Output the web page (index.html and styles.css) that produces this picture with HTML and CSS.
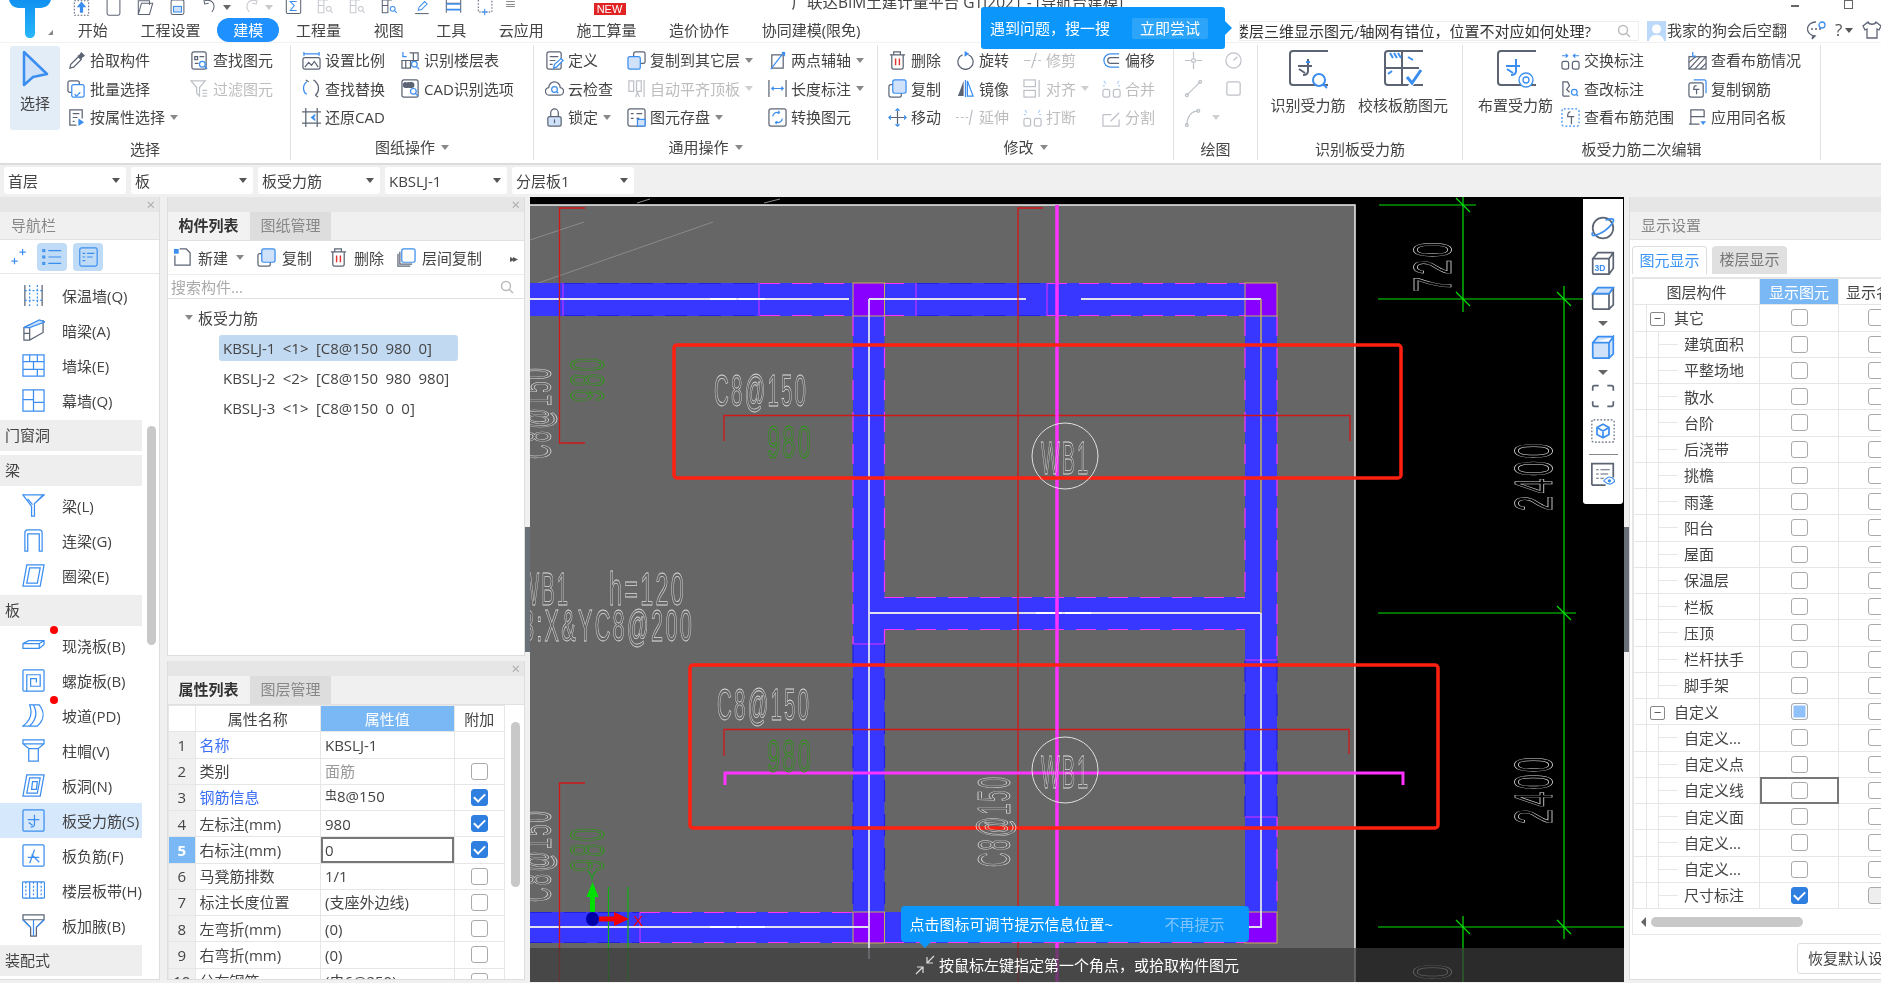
FILE: index.html
```html
<!DOCTYPE html>
<html lang="zh-CN">
<head>
<meta charset="utf-8">
<title>广联达BIM土建计量平台 GTJ2021</title>
<link rel="stylesheet" href="styles.css">
</head>
<body>
<svg class="defs" width="0" height="0">
<defs><linearGradient id="logoG" x1="0" y1="0" x2="0" y2="1"><stop offset="0" stop-color="#0f8ff0"/><stop offset="1" stop-color="#27b6fa"/></linearGradient></defs>
<symbol id="pick" viewBox="0 0 20 20"><path class="g" d="M3 18l1-4 8-8 3 3-8 8z"/><path class="fg" d="M11 5l2-1 2-3 4 4-3 2-1 2z"/></symbol>
<symbol id="batch" viewBox="0 0 20 20"><rect class="g" x="1" y="2" width="12" height="12" rx="2"/><rect class="b w" x="5" y="6" width="13" height="13" rx="2"/><path class="b" d="M8 16l2 2 4-4"/></symbol>
<symbol id="attr" viewBox="0 0 20 20"><path class="g" d="M10 18H3V2h13v9"/><path class="g" d="M6 6h7M6 10h5M6 14h2"/><path class="fb" d="M12 11l6 4-6 4z"/></symbol>
<symbol id="find" viewBox="0 0 20 20"><rect class="g" x="2" y="1" width="15" height="18" rx="2"/><path class="g" d="M5 6h3v3H5zM10 6h5M5 13h4"/><circle class="b w" cx="13" cy="14" r="3"/><path class="b" d="M15 16l3 3"/></symbol>
<symbol id="filter" viewBox="0 0 20 20"><path class="g" d="M1 2h15l-6 7v9l-3-3V9z"/><path class="g" d="M13 12h5M13 15h5M13 18h5"/></symbol>
<symbol id="scale" viewBox="0 0 20 20"><path class="b" d="M2 1v4M18 1v4M2 3h16"/><rect class="g" x="1" y="7" width="18" height="12" rx="2"/><path class="g" d="M3 17l4-5 3 3 3-4 4 6"/></symbol>
<symbol id="replace" viewBox="0 0 20 20"><path class="b" d="M5 3C0 7 1 14 5 16M5 16l-2-1"/><path class="g" d="M14 3c5 4 4 11 0 14M14 17l3 2M4 1l3 2M12 1l3 2"/></symbol>
<symbol id="restore" viewBox="0 0 20 20"><path class="g" d="M0 4h20M0 16h20M4 0v20M16 0v20"/><path class="fb" d="M9 10l5-4v3h-1v2h1v3z"/></symbol>
<symbol id="floor" viewBox="0 0 20 20"><path class="g" d="M9 2h9v8h-9M1 10h9v8H1zM13 2v8M5 10v8"/><path class="b" d="M2 1v5h4"/><circle class="b w" cx="14" cy="14" r="3"/><path class="b" d="M16 16l3 3"/></symbol>
<symbol id="cadopt" viewBox="0 0 20 20"><rect class="g" x="1" y="1" width="17" height="18" rx="2"/><text class="cadt" x="2.500" y="8">CAD</text><circle class="b w" cx="13" cy="13" r="3"/><path class="b" d="M15 15l3 3"/></symbol>
<symbol id="def" viewBox="0 0 20 20"><rect class="g" x="2" y="1" width="15" height="18" rx="2"/><path class="g" d="M5 6h9M5 10h6M5 14h3"/><path class="b w" d="M9 18l1-4 7-6 2 2-7 7z"/></symbol>
<symbol id="cloud" viewBox="0 0 20 20"><path class="g" d="M5 17a4 4 0 0 1-1-8 6 6 0 0 1 12 0 4 4 0 0 1-1 8z"/><circle class="b" cx="10" cy="11" r="3"/><path class="b" d="M12 13l2 2"/></symbol>
<symbol id="lock" viewBox="0 0 20 20"><path class="g" d="M6 9V5a4 4 0 0 1 8 0v4"/><rect class="g l" x="3" y="9" width="14" height="10" rx="2"/><path class="g" d="M10 12v4"/></symbol>
<symbol id="copyto" viewBox="0 0 20 20"><rect class="g" x="7" y="1" width="12" height="12" rx="2"/><rect class="b l" x="1" y="6" width="13" height="13" rx="2"/></symbol>
<symbol id="align" viewBox="0 0 20 20"><path class="g" d="M2 2h5v11H2zM10 2h5v11h-5zM18 1v18"/><path class="g" d="M9 19l2-5 2 5"/></symbol>
<symbol id="save" viewBox="0 0 20 20"><rect class="g" x="1" y="1" width="18" height="18" rx="2"/><path class="g" d="M4 6h3M10 6h6M4 11h3M10 11h3"/><rect class="b l" x="11" y="12" width="8" height="7"/></symbol>
<symbol id="twoaxis" viewBox="0 0 20 20"><path class="g" d="M4 4h12v14H4z"/><path class="b" d="M3 19L17 1"/><path class="fb" d="M14 1h4v5z"/></symbol>
<symbol id="length" viewBox="0 0 20 20"><path class="g" d="M1 1v18M19 1v18"/><path class="b" d="M4 10h12M6 8l-2 2 2 2M14 8l2 2-2 2"/></symbol>
<symbol id="convert" viewBox="0 0 20 20"><rect class="g" x="1" y="1" width="18" height="18" rx="2"/><path class="b" d="M5 9c0-3 3-5 6-4M11 3l1 2-2 1M15 11c0 3-3 5-6 4M9 17l-1-2 2-1"/></symbol>
<symbol id="delete" viewBox="0 0 20 20"><path class="g" d="M6 4V1h7v3M2 4h16M4 4v13a2 2 0 0 0 2 2h8a2 2 0 0 0 2-2V4"/><path class="r" d="M8 8v7M12 8v7"/></symbol>
<symbol id="rotate" viewBox="0 0 20 20"><path class="g" d="M7 4a8 8 0 1 0 6 0"/><path class="fb" d="M9 0l5 3-5 3z"/></symbol>
<symbol id="trim" viewBox="0 0 20 20"><path class="g" d="M1 10h7M12 10h2M16 10h3M14 2l-5 16"/></symbol>
<symbol id="offset" viewBox="0 0 20 20"><path class="b" d="M18 3H9a7 7 0 0 0 0 14h9"/><path class="g" d="M18 7H9a3 3 0 0 0 0 6h9"/></symbol>
<symbol id="copy" viewBox="0 0 20 20"><rect class="g" x="1" y="6" width="13" height="13" rx="2"/><rect class="b l" x="5" y="1" width="14" height="14" rx="2"/></symbol>
<symbol id="mirror" viewBox="0 0 20 20"><path class="fg" d="M8 2L2 18h6z"/><path class="b" d="M12 2l6 16h-6zM10 1v18"/></symbol>
<symbol id="alignb" viewBox="0 0 20 20"><rect class="g" x="1" y="1" width="12" height="7"/><rect class="g" x="1" y="12" width="12" height="7"/><path class="g" d="M17 1v18"/></symbol>
<symbol id="merge" viewBox="0 0 20 20"><rect class="g" x="1" y="11" width="7" height="8" rx="2"/><rect class="g" x="12" y="11" width="7" height="8" rx="2"/><path class="b" d="M2 2l2 3M18 2l-2 3M1 7h2M17 7h2"/></symbol>
<symbol id="move" viewBox="0 0 20 20"><path class="g" d="M3 10h14M10 3v14"/><path class="fb" d="M10 0l3 3H7zM10 20l3-3H7zM0 10l3-3v6zM20 10l-3-3v6z"/></symbol>
<symbol id="extend" viewBox="0 0 20 20"><path class="g" d="M0 10h3M5 10h3M10 10h3M17 2l-3 16"/></symbol>
<symbol id="split" viewBox="0 0 20 20"><path class="g" d="M1 7h9M18 12v7H1V7M9 14l9-9"/></symbol>
<symbol id="cross" viewBox="0 0 20 20"><path class="g" d="M1 10h6M13 10h6M10 1v6M10 13v6"/><circle class="g" cx="10" cy="10" r="2"/></symbol>
<symbol id="dial" viewBox="0 0 20 20"><circle class="g" cx="10" cy="10" r="8"/><path class="g" d="M10 10l4-4"/></symbol>
<symbol id="line" viewBox="0 0 20 20"><path class="g" d="M3 17L17 3"/><circle class="g" cx="3" cy="17" r="1.500"/><circle class="g" cx="17" cy="3" r="1.500"/></symbol>
<symbol id="sq" viewBox="0 0 20 20"><rect class="g" x="3" y="3" width="14" height="14" rx="2"/></symbol>
<symbol id="arc" viewBox="0 0 20 20"><path class="g" d="M3 18C3 9 8 3 15 3"/><circle class="g" cx="3" cy="18" r="1.500"/><circle class="g" cx="15" cy="3" r="1.500"/></symbol>
<symbol id="swap" viewBox="0 0 20 20"><rect class="g" x="1" y="11" width="7" height="8" rx="2"/><rect class="g" x="12" y="11" width="7" height="8" rx="2"/><path class="b" d="M1 5h5M5 3l2 2-2 2M19 5h-5M15 3l-2 2 2 2"/></symbol>
<symbol id="chk" viewBox="0 0 20 20"><path class="g" d="M2 18V3h5l2 4-3 4 3 3M9 18H2"/><circle class="b" cx="14" cy="14" r="3"/><path class="b" d="M16 16l2 2"/></symbol>
<symbol id="range" viewBox="0 0 20 20"><rect class="b dash" x="1" y="1" width="18" height="18" rx="2"/><path class="g" d="M10 4c-3 0-3 3-3 5h7M11 9v8"/></symbol>
<symbol id="status" viewBox="0 0 20 20"><rect class="g" x="1" y="6" width="18" height="13"/><path class="g" d="M1 12l7-6M1 19L13 6M7 19l12-13M13 19l6-6"/><path class="b" d="M5 1v4a2 2 0 0 0 3 0"/></symbol>
<symbol id="cprebar" viewBox="0 0 20 20"><path class="b" d="M6 1h11a2 2 0 0 1 2 2v12"/><rect class="g" x="1" y="4" width="15" height="15" rx="2"/><path class="g" d="M9 7c-3 0-3 3-3 4h6M9 11v5"/></symbol>
<symbol id="same" viewBox="0 0 20 20"><path class="g" d="M3 17V2h14M1 17h11M17 2v8M3 9h14"/><path class="fb" d="M13 14h6l-3 4z"/></symbol>
<symbol id="bigfind" viewBox="0 0 40 40"><rect class="g2" x="2" y="2" width="34" height="34" rx="3"/><path class="g2" d="M10 17h14M20 10v12c0 3-2 4-5 4M11 20l6 4"/><path class="b2" d="M22 13h-4"/><circle class="b2 w" cx="31" cy="31" r="6"/><path class="b2" d="M35 35l4 4"/></symbol>
<symbol id="bigcheck" viewBox="0 0 40 40"><rect class="g2" x="2" y="2" width="34" height="34" rx="3"/><path class="g2" d="M19 2v34M2 19h34"/><path class="b2" d="M7 4l3 5M11 4l3 5M15 4l3 5M25 8l5 3M5 25l4-3"/><path class="w2" d="M24 38l12-16 4 3-13 15z"/><path class="b3" d="M24 28l5 6 9-13"/></symbol>
<symbol id="bigset" viewBox="0 0 40 40"><rect class="g2" x="2" y="2" width="34" height="34" rx="3"/><path class="b2" d="M10 17h14M20 10v12c0 3-2 4-5 4M11 20l6 4"/><circle class="b w" cx="30" cy="31" r="7"/><circle class="b" cx="30" cy="31" r="3"/></symbol>
<symbol id="nwall" viewBox="0 0 24 24"><path class="g" d="M3 1v22M21 1v22"/><path class="b dash" d="M8 1v22M16 1v22M3 7h18M3 17h18"/></symbol>
<symbol id="nhid" viewBox="0 0 24 24"><path class="g" d="M2 9l6-3 14-4v12l-14 8H2zM8 6v16M2 15h6"/><path class="b l" d="M2 9l16-8 6 2-16 6z"/></symbol>
<symbol id="nblock" viewBox="0 0 24 24"><path class="b" d="M1 1h22v22H1zM1 8h22M1 16h22M8 1v7M16 1v7M12 8v8M16 16v7"/></symbol>
<symbol id="ncurt" viewBox="0 0 24 24"><path class="b" d="M1 1h22v22H1zM12 1v22M1 11h11M12 14h11"/></symbol>
<symbol id="nbeam" viewBox="0 0 24 24"><path class="b" d="M1 1h22L13 10v13h-3V13zM6 5l5 6M13 10l9-9"/></symbol>
<symbol id="nlink" viewBox="0 0 24 24"><path class="b" d="M3 23V4a3 3 0 0 1 3-3h12a3 3 0 0 1 3 3v19h-3V5H6v18z"/></symbol>
<symbol id="nring" viewBox="0 0 24 24"><path class="b" d="M5 1h18l-4 22H1zM8 4h11l-3 16H5z"/></symbol>
<symbol id="nslab" viewBox="0 0 24 24"><path class="b" d="M1 10l6-3h16v4l-5 4H1zM1 10h17v5M18 10l5-3"/></symbol>
<symbol id="nspiral" viewBox="0 0 24 24"><rect class="b" x="1" y="1" width="22" height="22" rx="1"/><path class="b" d="M5 23V6h14v12H9V10h6v4"/></symbol>
<symbol id="nramp" viewBox="0 0 24 24"><path class="b" d="M8 1h10c6 8 5 16-2 22H1c8-6 10-14 7-22zM12 1c4 7 3 15-4 22"/></symbol>
<symbol id="ncap" viewBox="0 0 24 24"><path class="b" d="M1 1h22v4l-6 5v13H7V10L1 5zM1 5h22M7 10h10"/></symbol>
<symbol id="nhole" viewBox="0 0 24 24"><path class="b" d="M5 1h18l-4 22H1zM8 4h11l-3 16H5zM11 8h5l-1 8h-5z"/></symbol>
<symbol id="nrebar" viewBox="0 0 24 24"><rect class="b" x="1" y="1" width="22" height="22" rx="1"/><path class="b" d="M6 11h12M13 6v10c0 2-2 3-4 3M7 14l4 3"/></symbol>
<symbol id="nneg" viewBox="0 0 24 24"><rect class="b" x="1" y="1" width="22" height="22" rx="1"/><path class="b" d="M6 14h12M13 6L8 20M10 11l8 8"/></symbol>
<symbol id="nband" viewBox="0 0 24 24"><rect class="b" x="0.500" y="3" width="23" height="17" rx="1"/><path class="b" d="M8 3v17M16 3v17"/><path class="b dash" d="M4 3v17M12 3v17M20 3v17"/></symbol>
<symbol id="nhaunch" viewBox="0 0 24 24"><path class="g" d="M1 1h22v5l-8 8v9H9v-9L1 6zM1 6h22"/><path class="b" d="M1 6l8 8M23 6l-8 8M12 6v17"/></symbol>
<symbol id="tnew" viewBox="0 0 20 20"><path class="g" d="M2 8v10h16V5l-4-4H7"/><path class="fb" d="M1 1h5v5H1z"/></symbol>
<symbol id="tfloor" viewBox="0 0 20 20"><path class="g" d="M1 6v13h13M3 4v13h13"/><rect class="b w" x="5" y="1" width="14" height="14" rx="2"/></symbol>
<symbol id="search" viewBox="0 0 14 14"><circle class="g2l" cx="6" cy="6" r="4.500"/><path class="g2l" d="M9.500 9.500L13 13"/></symbol>
<symbol id="sparkle" viewBox="0 0 20 20"><path class="b" d="M14 1v7M10.500 4.500h7M5 11v7M1.500 14.500h7"/></symbol>
<symbol id="list" viewBox="0 0 24 24"><path class="b" d="M8 5h14M8 12h14M8 19h14"/><rect class="b" x="2" y="4" width="2" height="2"/><rect class="b" x="2" y="11" width="2" height="2"/><rect class="b" x="2" y="18" width="2" height="2"/></symbol>
<symbol id="form" viewBox="0 0 24 24"><rect class="b" x="3" y="2" width="19" height="20" rx="2"/><path class="b" d="M6 8h3M11 8h8M6 12h3M11 12h6M6 16h3"/></symbol>
<symbol id="qup" viewBox="0 0 20 20"><rect class="g dash" x="1" y="1" width="18" height="18"/><path class="fb" d="M10 2l6 7h-4v7H8V9H4z"/></symbol>
<symbol id="qnew" viewBox="0 0 20 20"><path class="g" d="M2 0v17a2 2 0 0 0 2 2h12a2 2 0 0 0 2-2V0"/></symbol>
<symbol id="qopen" viewBox="0 0 20 20"><path class="g" d="M1 18V1h14v5M1 18h14l4-14H5z"/></symbol>
<symbol id="qsave" viewBox="0 0 20 20"><rect class="g" x="2" y="0" width="16" height="18" rx="2"/><rect class="b l" x="5" y="8" width="10" height="7"/></symbol>
<symbol id="qundo" viewBox="0 0 20 20"><path class="g" d="M4 1c10-3 15 6 9 14"/><path class="g" d="M3 0l1 5 5-1"/></symbol>
<symbol id="qredo" viewBox="0 0 20 20"><path class="g" d="M16 1C6-2 1 7 7 15"/><path class="g" d="M17 0l-1 5-5-1"/></symbol>
<symbol id="qsum" viewBox="0 0 20 20"><rect class="g" x="1" y="-2" width="18" height="19" rx="2"/><path class="b" d="M14 2H6l5 5-5 6h8"/></symbol>
<symbol id="qgrid" viewBox="0 0 20 20"><path class="g" d="M1 0h7v7H1zM1 7v9h7V7M8 0h5"/><circle class="g" cx="14" cy="11" r="3"/><path class="g" d="M16 13l3 3"/></symbol>
<symbol id="qgridb" viewBox="0 0 20 20"><path class="g" d="M1 0h7v7H1zM1 7v9h7V7M8 0h5"/><circle class="b" cx="14" cy="11" r="3"/><path class="b" d="M16 13l3 3"/></symbol>
<symbol id="qpen" viewBox="0 0 20 20"><path class="g" d="M2 17h17"/><path class="b" d="M6 13l1-4 7-7 3 3-7 7z"/></symbol>
<symbol id="qframe" viewBox="0 0 20 20"><path class="g" d="M1 0v16M19 0v16M1 4h18M1 12h18"/><path class="fb" d="M1 4h18v2H1zM1 11h18v2H1z"/></symbol>
<symbol id="qplus" viewBox="0 0 20 20"><rect class="g dash" x="1" y="-2" width="17" height="17"/><path class="b" d="M5 15h8M9 11v8"/></symbol>
<symbol id="forbit" viewBox="0 0 28 28"><circle class="g2" cx="14" cy="14" r="12"/><path class="b2" d="M3 23c5-1 12-4 18-10 4-4 6-8 5-9-2-2-6 0-9 1M3 23c-2 0-2-2-1-4"/></symbol>
<symbol id="f3d" viewBox="0 0 28 28"><path class="g2" d="M2 9h19v18H4a2 2 0 0 1-2-2zM2 9l6-7h18v18l-5 7M21 9l5-7"/><text class="f3t" x="4" y="23">3D</text></symbol>
<symbol id="fbox" viewBox="0 0 28 28"><path class="g2" d="M2 9h19v18H4a2 2 0 0 1-2-2zM21 27l5-5V2M21 9l5-7"/><path class="b2 l" d="M2 9l6-7h18l-5 7z"/></symbol>
<symbol id="fboxb" viewBox="0 0 28 28"><path class="b2 l" d="M2 9h19v18H4a2 2 0 0 1-2-2zM21 27l5-5V2l-5 7zM2 9l6-7h18"/></symbol>
<symbol id="fbrk" viewBox="0 0 28 28"><path class="g2" d="M2 8V4a2 2 0 0 1 2-2h5M19 2h5a2 2 0 0 1 2 2v4M26 20v4a2 2 0 0 1-2 2h-5M9 26H4a2 2 0 0 1-2-2v-4"/></symbol>
<symbol id="fcube" viewBox="0 0 28 28"><rect class="g dash" x="1" y="1" width="26" height="26" rx="2"/><path class="b2" d="M14 6l7 4v8l-7 4-7-4v-8zM7 10l7 4 7-4M14 14v8"/></symbol>
<symbol id="fdoc" viewBox="0 0 28 28"><path class="g2" d="M17 27H3a2 2 0 0 1-2-2V2h25v16"/><path class="g" d="M6 9h3M11 9h11M6 14h3M11 14h9M6 19h3M11 19h4"/><path class="b" d="M15 22c5-6 9-6 13 0-4 5-8 5-13 0z"/><circle class="fb" cx="21.500" cy="22" r="2"/></symbol>
</svg>

<div class="app">
  <header class="head">
    <div class="logo">
      <svg class="logo-t" viewBox="0 0 42 40" width="42" height="40"><path class="logo-p" d="M0 0h42c0 5-3 9-10 10h-6v25c0 3-2 5-5 5s-5-2-5-5V10H9C3 9 0 5 0 0z"/></svg>
      <span class="logo-c"></span>
    </div>
    <div class="head-main">
      <div class="qa">
        <svg class="qi"><use href="#qup"/></svg>
        <svg class="qi"><use href="#qnew"/></svg>
        <svg class="qi"><use href="#qopen"/></svg>
        <svg class="qi"><use href="#qsave"/></svg>
        <svg class="qi"><use href="#qundo"/></svg><span class="car qcar"></span>
        <svg class="qi dis"><use href="#qredo"/></svg><span class="car qcar dis"></span>
        <svg class="qi"><use href="#qsum"/></svg>
        <svg class="qi dis"><use href="#qgrid"/></svg>
        <svg class="qi dis"><use href="#qgrid"/></svg>
        <svg class="qi"><use href="#qgridb"/></svg>
        <svg class="qi"><use href="#qpen"/></svg>
        <svg class="qi"><use href="#qframe"/></svg>
        <svg class="qi"><use href="#qplus"/></svg>
        <span class="qmore">≡</span>
        <span class="new">NEW</span>
        <span class="title">广联达BIM土建计量平台 GTJ2021 - [导航台建模]</span>
        <span class="winbtn winmin"></span>
        <span class="winbtn winmax"></span>
      </div>
      <div class="tabrow">
        <nav class="tabs">
          <span class="tab">开始</span><span class="tab">工程设置</span><span class="tab on">建模</span><span class="tab">工程量</span><span class="tab">视图</span><span class="tab">工具</span><span class="tab">云应用</span><span class="tab">施工算量</span><span class="tab">造价协作</span><span class="tab">协同建模(限免)</span>
        </nav>
        <div class="tabright">
          <div class="sbox"><span class="stext">楼层三维显示图元/轴网有错位，位置不对应如何处理?</span><svg class="sico"><use href="#search"/></svg></div>
          <svg class="avatar" viewBox="0 0 19 20"><rect width="19" height="20" fill="#bcd9fa"/><circle cx="9.500" cy="8" r="4.500" fill="#fff"/><path d="M2 20c1-5 4-6 7.500-6s6.500 1 7.500 6z" fill="#fff"/></svg>
          <span class="uname">我家的狗会后空翻</span>
          <svg class="hico hchat" viewBox="0 0 20 20"><path class="g" d="M9 2a8 7 0 1 0-1 14l-3 3 1-3"/><circle class="fg" cx="5" cy="9" r="1"/><circle class="fg" cx="9" cy="9" r="1"/><circle class="fg" cx="13" cy="9" r="1"/><circle class="b w" cx="15" cy="5" r="3"/></svg>
          <span class="hq">?</span><span class="car hqcar"></span>
          <svg class="hico" viewBox="0 0 20 20"><path class="g" d="M6 2L1 6l2 4 2-1v9h10V9l2 1 2-4-5-4c-1 3-7 3-8 0z"/></svg>
        </div>
      </div>
    </div>
    <div class="tip-search"><span>遇到问题，搜一搜</span><span class="tip-btn">立即尝试</span></div>
  </header>

  <section class="ribbon">
    <div class="grp g1">
      <div class="body">
        <div class="bigsel"><svg class="sel-ico" viewBox="0 0 28 40"><path d="M3 2v33l9-8 14-3z" fill="#cfe2fa" stroke="#3b8ef0" stroke-width="2.500" stroke-linejoin="round"/></svg><span>选择</span></div>
        <div class="col">
          <div class="it"><svg class="ic"><use href="#pick"/></svg>拾取构件</div>
          <div class="it"><svg class="ic"><use href="#batch"/></svg>批量选择</div>
          <div class="it"><svg class="ic"><use href="#attr"/></svg>按属性选择<span class="car"></span></div>
        </div>
        <div class="col">
          <div class="it"><svg class="ic"><use href="#find"/></svg>查找图元</div>
          <div class="it dis"><svg class="ic"><use href="#filter"/></svg>过滤图元</div>
        </div>
      </div>
      <div class="lab">选择</div>
    </div>
    <div class="grp g2">
      <div class="body">
        <div class="col">
          <div class="it"><svg class="ic"><use href="#scale"/></svg>设置比例</div>
          <div class="it"><svg class="ic"><use href="#replace"/></svg>查找替换</div>
          <div class="it"><svg class="ic"><use href="#restore"/></svg>还原CAD</div>
        </div>
        <div class="col">
          <div class="it"><svg class="ic"><use href="#floor"/></svg>识别楼层表</div>
          <div class="it"><svg class="ic"><use href="#cadopt"/></svg>CAD识别选项</div>
        </div>
      </div>
      <div class="lab up">图纸操作<span class="car"></span></div>
    </div>
    <div class="grp g3">
      <div class="body">
        <div class="col">
          <div class="it"><svg class="ic"><use href="#def"/></svg>定义</div>
          <div class="it"><svg class="ic"><use href="#cloud"/></svg>云检查</div>
          <div class="it"><svg class="ic"><use href="#lock"/></svg>锁定<span class="car"></span></div>
        </div>
        <div class="col">
          <div class="it"><svg class="ic"><use href="#copyto"/></svg>复制到其它层<span class="car"></span></div>
          <div class="it dis"><svg class="ic"><use href="#align"/></svg>自动平齐顶板<span class="car"></span></div>
          <div class="it"><svg class="ic"><use href="#save"/></svg>图元存盘<span class="car"></span></div>
        </div>
        <div class="col">
          <div class="it"><svg class="ic"><use href="#twoaxis"/></svg>两点辅轴<span class="car"></span></div>
          <div class="it"><svg class="ic"><use href="#length"/></svg>长度标注<span class="car"></span></div>
          <div class="it"><svg class="ic"><use href="#convert"/></svg>转换图元</div>
        </div>
      </div>
      <div class="lab up">通用操作<span class="car"></span></div>
    </div>
    <div class="grp g4">
      <div class="body">
        <div class="col">
          <div class="it"><svg class="ic"><use href="#delete"/></svg>删除</div>
          <div class="it"><svg class="ic"><use href="#copy"/></svg>复制</div>
          <div class="it"><svg class="ic"><use href="#move"/></svg>移动</div>
        </div>
        <div class="col">
          <div class="it"><svg class="ic"><use href="#rotate"/></svg>旋转</div>
          <div class="it"><svg class="ic"><use href="#mirror"/></svg>镜像</div>
          <div class="it dis"><svg class="ic"><use href="#extend"/></svg>延伸</div>
        </div>
        <div class="col">
          <div class="it dis"><svg class="ic"><use href="#trim"/></svg>修剪</div>
          <div class="it dis"><svg class="ic"><use href="#alignb"/></svg>对齐<span class="car"></span></div>
          <div class="it dis"><svg class="ic"><use href="#merge"/></svg>打断</div>
        </div>
        <div class="col">
          <div class="it"><svg class="ic"><use href="#offset"/></svg>偏移</div>
          <div class="it dis"><svg class="ic"><use href="#merge"/></svg>合并</div>
          <div class="it dis"><svg class="ic"><use href="#split"/></svg>分割</div>
        </div>
      </div>
      <div class="lab up">修改<span class="car"></span></div>
    </div>
    <div class="grp g5">
      <div class="body">
        <div class="col">
          <div class="it dis"><svg class="ic"><use href="#cross"/></svg></div>
          <div class="it dis"><svg class="ic"><use href="#line"/></svg></div>
          <div class="it dis"><svg class="ic"><use href="#arc"/></svg><span class="car"></span></div>
        </div>
        <div class="col">
          <div class="it dis"><svg class="ic"><use href="#dial"/></svg></div>
          <div class="it dis"><svg class="ic"><use href="#sq"/></svg></div>
        </div>
      </div>
      <div class="lab">绘图</div>
    </div>
    <div class="grp g6">
      <div class="body">
        <div class="bigit"><svg class="bigic"><use href="#bigfind"/></svg>识别受力筋</div>
        <div class="bigit"><svg class="bigic"><use href="#bigcheck"/></svg>校核板筋图元</div>
      </div>
      <div class="lab">识别板受力筋</div>
    </div>
    <div class="grp g7">
      <div class="body">
        <div class="bigit"><svg class="bigic"><use href="#bigset"/></svg>布置受力筋</div>
        <div class="col">
          <div class="it"><svg class="ic"><use href="#swap"/></svg>交换标注</div>
          <div class="it"><svg class="ic"><use href="#chk"/></svg>查改标注</div>
          <div class="it"><svg class="ic"><use href="#range"/></svg>查看布筋范围</div>
        </div>
        <div class="col">
          <div class="it"><svg class="ic"><use href="#status"/></svg>查看布筋情况</div>
          <div class="it"><svg class="ic"><use href="#cprebar"/></svg>复制钢筋</div>
          <div class="it"><svg class="ic"><use href="#same"/></svg>应用同名板</div>
        </div>
      </div>
      <div class="lab">板受力筋二次编辑</div>
    </div>
  </section>

  <div class="selbar">
    <div class="sel">首层<span class="car"></span></div>
    <div class="sel">板<span class="car"></span></div>
    <div class="sel">板受力筋<span class="car"></span></div>
    <div class="sel">KBSLJ-1<span class="car"></span></div>
    <div class="sel">分层板1<span class="car"></span></div>
  </div>

  <main class="main">
    <aside class="nav">
      <div class="closebar">×</div>
      <div class="navhead">导航栏</div>
      <div class="navtools">
        <svg class="nt-spark"><use href="#sparkle"/></svg>
        <span class="nt-btn"><svg class="nt-ic"><use href="#list"/></svg></span>
        <span class="nt-btn"><svg class="nt-ic"><use href="#form"/></svg></span>
      </div>
      <div class="navbody">
        <div class="navlist">
          <div class="ni"><svg class="nic"><use href="#nwall"/></svg>保温墙(Q)</div>
          <div class="ni"><svg class="nic"><use href="#nhid"/></svg>暗梁(A)</div>
          <div class="ni"><svg class="nic"><use href="#nblock"/></svg>墙垛(E)</div>
          <div class="ni"><svg class="nic"><use href="#ncurt"/></svg>幕墙(Q)</div>
          <div class="nsec">门窗洞</div>
          <div class="nsec">梁</div>
          <div class="ni"><svg class="nic"><use href="#nbeam"/></svg>梁(L)</div>
          <div class="ni"><svg class="nic"><use href="#nlink"/></svg>连梁(G)</div>
          <div class="ni"><svg class="nic"><use href="#nring"/></svg>圈梁(E)</div>
          <div class="nsec">板</div>
          <div class="ni"><svg class="nic"><use href="#nslab"/></svg><i class="dot"></i>现浇板(B)</div>
          <div class="ni"><svg class="nic"><use href="#nspiral"/></svg>螺旋板(B)</div>
          <div class="ni"><svg class="nic"><use href="#nramp"/></svg><i class="dot"></i>坡道(PD)</div>
          <div class="ni"><svg class="nic"><use href="#ncap"/></svg>柱帽(V)</div>
          <div class="ni"><svg class="nic"><use href="#nhole"/></svg>板洞(N)</div>
          <div class="ni on"><svg class="nic"><use href="#nrebar"/></svg>板受力筋(S)</div>
          <div class="ni"><svg class="nic"><use href="#nneg"/></svg>板负筋(F)</div>
          <div class="ni"><svg class="nic"><use href="#nband"/></svg>楼层板带(H)</div>
          <div class="ni"><svg class="nic"><use href="#nhaunch"/></svg>板加腋(B)</div>
          <div class="nsec">装配式</div>
        </div>
        <div class="navscroll"><span class="thumb"></span></div>
      </div>
    </aside>

    <div class="midcol">
      <section class="panel comp">
        <div class="closebar">×</div>
        <div class="ptabs"><span class="ptab on">构件列表</span><span class="ptab">图纸管理</span></div>
        <div class="ctools">
          <span class="ct ct-new"><svg class="ic"><use href="#tnew"/></svg>新建<span class="car"></span></span>
          <span class="ct ct-cp"><svg class="ic"><use href="#copy"/></svg>复制</span>
          <span class="ct ct-del"><svg class="ic"><use href="#delete"/></svg>删除</span>
          <span class="ct ct-fl"><svg class="ic"><use href="#tfloor"/></svg>层间复制</span>
          <span class="ct-more">▸▸</span>
        </div>
        <div class="csearch"><span>搜索构件...</span><svg class="sico"><use href="#search"/></svg></div>
        <div class="tree">
          <div class="troot"><span class="car"></span>板受力筋</div>
          <div class="tn on">KBSLJ-1 &lt;1&gt; [C8@150 980 0]</div>
          <div class="tn">KBSLJ-2 &lt;2&gt; [C8@150 980 980]</div>
          <div class="tn">KBSLJ-3 &lt;1&gt; [C8@150 0 0]</div>
        </div>
      </section>
      <section class="panel props">
        <div class="closebar">×</div>
        <div class="ptabs"><span class="ptab on">属性列表</span><span class="ptab">图层管理</span></div>
        <div class="pbody">
          <table class="ptable">
            <colgroup><col class="c1"><col class="c2"><col class="c3"><col class="c4"></colgroup>
            <tr><th></th><th>属性名称</th><th class="hl">属性值</th><th>附加</th></tr>
            <tr><td class="n">1</td><td class="link">名称</td><td>KBSLJ-1</td><td></td></tr>
            <tr><td class="n">2</td><td>类别</td><td class="mut">面筋</td><td class="ck"><span class="cb"></span></td></tr>
            <tr><td class="n">3</td><td class="link">钢筋信息</td><td><span class="rb">虫</span>8@150</td><td class="ck"><span class="cb on"></span></td></tr>
            <tr><td class="n">4</td><td>左标注(mm)</td><td>980</td><td class="ck"><span class="cb on"></span></td></tr>
            <tr><td class="n sel5">5</td><td>右标注(mm)</td><td class="focus">0</td><td class="ck"><span class="cb on"></span></td></tr>
            <tr><td class="n">6</td><td>马凳筋排数</td><td>1/1</td><td class="ck"><span class="cb"></span></td></tr>
            <tr><td class="n">7</td><td>标注长度位置</td><td>(支座外边线)</td><td class="ck"><span class="cb"></span></td></tr>
            <tr><td class="n">8</td><td>左弯折(mm)</td><td>(0)</td><td class="ck"><span class="cb"></span></td></tr>
            <tr><td class="n">9</td><td>右弯折(mm)</td><td>(0)</td><td class="ck"><span class="cb"></span></td></tr>
            <tr><td class="n">10</td><td>分布钢筋</td><td>(虫6@250)</td><td class="ck"><span class="cb"></span></td></tr>
          </table>
          <div class="pscroll"><span class="thumb"></span></div>
        </div>
      </section>
    </div>

    <div class="gutter"><span class="grip"></span></div>

    <div class="canvas">
      <svg class="cad" width="1094" height="785" viewBox="530 198 1094 785">
        <rect x="530" y="206" width="825" height="777" fill="#666"/>
        <path d="M530 206H1355V983" fill="none" stroke="#eee" stroke-width="1.500"/>
        <path d="M530 287L713 223M530 241L584 223M637 204L650 200M764 204L780 200" stroke="#8a8a8a" stroke-width="1" fill="none"/>
        <g fill="#3737ff">
          <rect x="530" y="284" width="747" height="33"/>
          <rect x="853" y="317" width="31.500" height="596"/>
          <rect x="1245" y="317" width="32" height="596"/>
          <rect x="884" y="598" width="361" height="33"/>
          <rect x="530" y="913" width="747" height="31"/>
        </g>
        <g class="dk" fill="none">
          <path d="M563 284.500H760M563 316.500H760M916 284.500H1047M916 316.500H1047"/>
          <path d="M853 645V913M884.500 645V913M1245 661V818M1277 661V818"/>
          <path d="M530 913.500H640M530 943.500H640"/>
        </g>
        <g class="pk" fill="none">
          <path d="M760 284.500H853M760 316.500H853M884 284.500H916M884 316.500H916M1047 284.500H1245M1047 316.500H1245"/>
          <path d="M884.500 317V598M884.500 631V645M853 317V645M1277 317V661M1245 317V598M1277 818V913"/>
          <path d="M884 598.500H1245M884 630.500H1245M640 913.500H853M640 943.500H853M884 943.500H1245"/>
        </g>
        <path d="M563 284V317M759 284V317M916 284V317M1047 284V317M853 645H884.500M1245 661H1277M1245 818H1277M640 913V944M853 774H884.500" stroke="#ff33ff" stroke-width="1" fill="none" opacity=".85"/>
        <g fill="#8800ff" stroke="#c8b050" stroke-width="1">
          <rect x="853" y="284" width="31.500" height="33"/>
          <rect x="1245" y="284" width="32" height="33"/>
          <rect x="853" y="913" width="31.500" height="31"/>
          <rect x="1245" y="913" width="32" height="31"/>
        </g>
        <g fill="none" stroke="#e0e0f0" stroke-width="1.800">
          <path d="M530 300H849M869 300H1026M1081 300H1261"/>
          <path d="M869 300V960"/>
          <path d="M869 614H1261M530 928H869M1261 614V928H1245"/>
        </g>
        <path d="M1261 300V614" fill="none" stroke="#c0b060" stroke-width="1.500"/>
        <path d="M710 300H736M739 300H765M710 928H736M739 928H765M1036 614H1062M1065 614H1091" stroke="#fff" stroke-width="1.800"/>

        <g fill="none" stroke="#d01818" stroke-width="1.300">
          <path d="M585 209H559.500V444H585"/>
          <path d="M1043 209H1018V983"/>
          <path d="M585 784H559.500V983"/>
          <path d="M724 442V416.500H1350V442"/>
          <path d="M724 757V730.500H1349V755"/>
        </g>
        <path d="M1057 206V983" stroke="#ff33ff" stroke-width="3.500"/>
        <path d="M725 786V774H1403V786" fill="none" stroke="#ff33ff" stroke-width="3"/>
        <rect x="674" y="346" width="727" height="133" rx="3" fill="none" stroke="#ff2010" stroke-width="3.500"/>
        <rect x="690" y="666" width="748" height="163" rx="3" fill="none" stroke="#ff2010" stroke-width="3.500"/>

        <g class="cadw">
          <text x="714" y="407" font-size="44" textLength="94" lengthAdjust="spacingAndGlyphs">C8@150</text>
          <text x="717" y="721" font-size="44" textLength="94" lengthAdjust="spacingAndGlyphs">C8@150</text>
          <text transform="translate(551 460) rotate(-90)" font-size="44" textLength="93" lengthAdjust="spacingAndGlyphs">C8@150</text>
          <text transform="translate(551 903) rotate(-90)" font-size="44" textLength="93" lengthAdjust="spacingAndGlyphs">C8@150</text>
          <text transform="translate(1010 868) rotate(-90)" font-size="46" textLength="92" lengthAdjust="spacingAndGlyphs">C8@150</text>
          <text x="1041" y="475" font-size="47" textLength="49" lengthAdjust="spacingAndGlyphs">WB1</text>
          <text x="1041" y="789" font-size="47" textLength="49" lengthAdjust="spacingAndGlyphs">WB1</text>
          <text x="520" y="606" font-size="46" textLength="50" lengthAdjust="spacingAndGlyphs">WB1</text>
          <text x="609" y="606" font-size="46" textLength="77" lengthAdjust="spacingAndGlyphs">h=120</text>
          <text x="522" y="642" font-size="44" textLength="172" lengthAdjust="spacingAndGlyphs">3:X&amp;YC8@200</text>
          <text transform="translate(1451 293) rotate(-90)" font-size="54" textLength="52" lengthAdjust="spacingAndGlyphs">720</text>
          <text transform="translate(1552 512) rotate(-90)" font-size="54" textLength="70" lengthAdjust="spacingAndGlyphs">2400</text>
          <text transform="translate(1552 825) rotate(-90)" font-size="54" textLength="69" lengthAdjust="spacingAndGlyphs">2400</text>
          <text transform="translate(1451 1033) rotate(-90)" font-size="54" textLength="70" lengthAdjust="spacingAndGlyphs">2400</text>
        </g>
        <circle cx="1065" cy="457" r="33" fill="none" stroke="#e0e0e0" stroke-width="1"/>
        <circle cx="1065" cy="771" r="33" fill="none" stroke="#e0e0e0" stroke-width="1"/>
        <g class="cadg">
          <text x="767" y="459" font-size="46" textLength="46" lengthAdjust="spacingAndGlyphs">980</text>
          <text x="767" y="773" font-size="46" textLength="46" lengthAdjust="spacingAndGlyphs">980</text>
          <text transform="translate(604 403) rotate(-90)" font-size="48" textLength="46" lengthAdjust="spacingAndGlyphs">980</text>
          <text transform="translate(604 873) rotate(-90)" font-size="48" textLength="46" lengthAdjust="spacingAndGlyphs">980</text>
        </g>
        <path d="M1379 206H1476M1463 198V313M1378 300H1583M1564 287V940M1378 614H1576M1378 928H1624M1463 917V983" fill="none" stroke="#00e000" stroke-width="1.200"/>
        <path d="M1456 199l14 14M1456 293l14 14M1557 293l14 14M1557 607l14 14M1557 921l14 14M1456 921l14 14" fill="none" stroke="#00e000" stroke-width="1.200"/>

        <path d="M608.500 888V983M628 888V983" stroke="#10b010" stroke-width="1.200"/>
        <path d="M592.500 913V893" stroke="#00e000" stroke-width="5"/>
        <path d="M592.500 883l-6 15h12z" fill="#00e000"/>
        <path d="M599 920H618" stroke="#f00000" stroke-width="5"/>
        <path d="M629 920l-15-7v14z" fill="#f00000"/>
        <ellipse cx="592.500" cy="920" rx="6.500" ry="7" fill="#0000a8"/>
        <text class="axy" x="587" y="882">Y</text>
        <text class="axx" x="633" y="927">X</text>
      </svg>

      <div class="ftools">
        <svg class="fi"><use href="#forbit"/></svg>
        <svg class="fi"><use href="#f3d"/></svg>
        <svg class="fi"><use href="#fbox"/></svg>
        <span class="car fcar"></span>
        <svg class="fi"><use href="#fboxb"/></svg>
        <span class="car fcar"></span>
        <svg class="fi"><use href="#fbrk"/></svg>
        <svg class="fi"><use href="#fcube"/></svg>
        <span class="fdiv"></span>
        <svg class="fi"><use href="#fdoc"/></svg>
      </div>
      <div class="tip-bar"><span>点击图标可调节提示信息位置~</span><span class="tip-off">不再提示</span></div>
      <div class="statusbar">
        <svg class="st-ic" viewBox="0 0 20 20"><path d="M12 8L19 1M12 2v6h6M8 12l-7 7M2 12h6v6" fill="none" stroke="#ddd" stroke-width="1.200"/></svg>
        按鼠标左键指定第一个角点，或拾取构件图元
      </div>
    </div>

    <div class="gutter gut2"><span class="grip"></span></div>

    <aside class="disp">
      <div class="closebar"></div>
      <div class="navhead">显示设置</div>
      <div class="dtabs"><span class="dtab on">图元显示</span><span class="dtab">楼层显示</span></div>
      <div class="dwrap">
        <table class="dtable">
          <colgroup><col class="d1"><col class="d2"><col class="d3"></colgroup>
          <tr><th>图层构件</th><th class="hl">显示图元</th><th>显示名称</th></tr>
          <tr><td class="root"><span class="exp">−</span>其它</td><td class="ck"><span class="cb"></span></td><td class="ck"><span class="cb"></span></td></tr>
          <tr><td class="leaf">建筑面积</td><td class="ck"><span class="cb"></span></td><td class="ck"><span class="cb"></span></td></tr>
          <tr><td class="leaf">平整场地</td><td class="ck"><span class="cb"></span></td><td class="ck"><span class="cb"></span></td></tr>
          <tr><td class="leaf">散水</td><td class="ck"><span class="cb"></span></td><td class="ck"><span class="cb"></span></td></tr>
          <tr><td class="leaf">台阶</td><td class="ck"><span class="cb"></span></td><td class="ck"><span class="cb"></span></td></tr>
          <tr><td class="leaf">后浇带</td><td class="ck"><span class="cb"></span></td><td class="ck"><span class="cb"></span></td></tr>
          <tr><td class="leaf">挑檐</td><td class="ck"><span class="cb"></span></td><td class="ck"><span class="cb"></span></td></tr>
          <tr><td class="leaf">雨蓬</td><td class="ck"><span class="cb"></span></td><td class="ck"><span class="cb"></span></td></tr>
          <tr><td class="leaf">阳台</td><td class="ck"><span class="cb"></span></td><td class="ck"><span class="cb"></span></td></tr>
          <tr><td class="leaf">屋面</td><td class="ck"><span class="cb"></span></td><td class="ck"><span class="cb"></span></td></tr>
          <tr><td class="leaf">保温层</td><td class="ck"><span class="cb"></span></td><td class="ck"><span class="cb"></span></td></tr>
          <tr><td class="leaf">栏板</td><td class="ck"><span class="cb"></span></td><td class="ck"><span class="cb"></span></td></tr>
          <tr><td class="leaf">压顶</td><td class="ck"><span class="cb"></span></td><td class="ck"><span class="cb"></span></td></tr>
          <tr><td class="leaf">栏杆扶手</td><td class="ck"><span class="cb"></span></td><td class="ck"><span class="cb"></span></td></tr>
          <tr><td class="leaf">脚手架</td><td class="ck"><span class="cb"></span></td><td class="ck"><span class="cb"></span></td></tr>
          <tr><td class="root"><span class="exp">−</span>自定义</td><td class="ck"><span class="cb tri"></span></td><td class="ck"><span class="cb"></span></td></tr>
          <tr><td class="leaf">自定义...</td><td class="ck"><span class="cb"></span></td><td class="ck"><span class="cb"></span></td></tr>
          <tr><td class="leaf">自定义点</td><td class="ck"><span class="cb"></span></td><td class="ck"><span class="cb"></span></td></tr>
          <tr><td class="leaf">自定义线</td><td class="ck focus"><span class="cb"></span></td><td class="ck"><span class="cb"></span></td></tr>
          <tr><td class="leaf">自定义面</td><td class="ck"><span class="cb"></span></td><td class="ck"><span class="cb"></span></td></tr>
          <tr><td class="leaf">自定义...</td><td class="ck"><span class="cb"></span></td><td class="ck"><span class="cb"></span></td></tr>
          <tr><td class="leaf">自定义...</td><td class="ck"><span class="cb"></span></td><td class="ck"><span class="cb"></span></td></tr>
          <tr><td class="leaf">尺寸标注</td><td class="ck"><span class="cb on"></span></td><td class="ck"><span class="cb off"></span></td></tr>
        </table>
        <div class="hscroll"><span class="harrow"></span><span class="hthumb"></span></div>
      </div>
      <div class="dfoot"><span class="restore">恢复默认设置</span></div>
    </aside>
  </main>
</div>
</body>
</html>
```
FILE: styles.css
```css
* { box-sizing: border-box; }
html, body { margin: 0; padding: 0; }
body {
  width: 1881px; height: 983px; overflow: hidden; background: #f0f0f0; color: #444;
  font-family: "Open Sans", "Noto Sans CJK SC", sans-serif; font-size: 15px; line-height: 20px;
}
.defs { position: absolute; }
.g { stroke: #5c6474; fill: none; stroke-width: 1.300; }
.b { stroke: #3b8ef0; fill: none; stroke-width: 1.300; }
.g2 { stroke: #5c6474; fill: none; stroke-width: 2; }
.b2 { stroke: #3b8ef0; fill: none; stroke-width: 2; }
.b3 { stroke: #3b8ef0; fill: none; stroke-width: 3; }
.g2l { stroke: #bbb; fill: none; stroke-width: 1.500; }
.r { stroke: #e53030; fill: none; stroke-width: 1.500; }
.w { fill: #fff; }
.w2 { fill: #fff; stroke: none; }
.l { fill: #cfe2fa; }
.fb { fill: #3b8ef0; stroke: none; }
.fg { fill: #5c6474; stroke: none; }
.dash { stroke-dasharray: 2 2; }
.cadt { font: bold 5px "Liberation Sans", sans-serif; fill: #3b8ef0; }
.f3t { font: bold 10px "Liberation Sans", sans-serif; fill: #3b8ef0; }
.logo-p { fill: url(#logoG); }

.app { width: 1881px; height: 983px; display: flex; flex-direction: column; filter: blur(.35px); }

/* header */
.head { height: 42px; background: #fff; display: flex; position: relative; flex: none; }
.logo { width: 61.500px; flex: none; overflow: hidden; position: relative; display: flex; padding-left: 9px; }
.logo-t { flex: none; margin-top: -2px; }
.logo-c { position: absolute; left: 48px; top: 30px; width: 0; height: 0; border-left: 5px solid transparent; border-bottom: 5px solid #888; }
.head-main { flex: 1; min-width: 0; display: flex; flex-direction: column; }
.qa { height: 18px; display: flex; align-items: flex-start; overflow: hidden; padding-left: 10px; }
.qi { width: 19px; height: 16px; flex: none; margin-right: 13px; }
.qi.dis, .car.dis { opacity: .35; }
.car { display: inline-block; width: 0; height: 0; border-left: 4px solid transparent; border-right: 4px solid transparent; border-top: 5px solid #888; flex: none; }
.qcar { margin: 5px 11px 0 -9px; border-top-color: #666; }
.qmore { flex: none; width: 12px; margin-left: -3px; color: #666; line-height: 10px; font-size: 12px; }
.new { flex: none; width: 32px; height: 12px; margin: 3px 0 0 77px; background: #e02424; color: #fff; font: 11px/12px "Liberation Sans", sans-serif; text-align: center; }
.title { flex: none; margin: -8px 0 0 166px; font-size: 15.500px; line-height: 20px; white-space: nowrap; }
.winbtn { flex: none; display: block; }
.winmin { width: 8px; height: 2px; background: #666; margin: 5px 0 0 auto; }
.winmax { width: 9px; height: 9px; border: 1.500px solid #666; margin: 0 28px 0 45px; }
.tabrow { height: 24px; display: flex; }
.tabs { display: flex; flex: none; width: 1177.500px; }
.tab { padding: 0 16.300px; line-height: 24px; white-space: nowrap; flex: none; }
.tab.on { background: #1e90ff; color: #fff; border-radius: 12px; height: 24px; padding: 0 16px; margin: 0 .5px; }
.tabright { flex: none; width: 642px; display: flex; align-items: center; height: 24px; }
.sbox { width: 400px; height: 20px; margin-top: 2px; border: 1px solid #eee; background: #fff; display: flex; align-items: center; overflow: hidden; flex: none; }
.stext { flex: none; width: 374px; margin-left: -6px; font-size: 15px; white-space: nowrap; color: #333; }
.sico { width: 14px; height: 14px; flex: none; margin-left: 9px; }
.avatar { width: 19px; height: 20px; flex: none; margin: 2px 1px 0 8px; }
.uname { flex: none; width: 120px; white-space: nowrap; }
.hico { width: 20px; height: 20px; flex: none; }
.hchat { margin-left: 20px; }
.hq { flex: none; font-size: 17px; margin-left: 8px; color: #555; }
.hqcar { margin: 0 9px 0 3px; border-top-color: #555; }
.tip-search { position: absolute; left: 981px; top: 7px; width: 244px; height: 42px; background: #0a96fa; border-radius: 3px; color: #fff; display: flex; align-items: center; padding-left: 9px; z-index: 5; }
.tip-search::after { content: ""; position: absolute; right: -7px; top: 14px; border-left: 7px solid #0a96fa; border-top: 7px solid transparent; border-bottom: 7px solid transparent; }
.tip-btn { width: 76px; height: 21px; line-height: 21px; text-align: center; margin-left: 22px; background: rgba(255,255,255,.14); border-radius: 2px; }

/* ribbon */
.ribbon { height: 123px; flex: none; background: #fff; border-bottom: 2px solid #dcdcdc; display: flex; border-top: 1px solid #f2f2f2; }
.grp { flex: none; display: flex; flex-direction: column; position: relative; border-right: 1px solid #e2e2e2; margin-bottom: 4px; margin-top: 2px; height: 115px; }
.g1 { width: 291px; } .g2 { width: 243px; } .g3 { width: 344px; } .g4 { width: 296px; }
.g5 { width: 84px; } .g6 { width: 205px; } .g7 { width: 358px; }
.body { display: grid; padding-top: 1px; height: 93px; flex: none; }
.g1 .body { padding-left: 10px; grid-template-columns: 57px 123px 1fr; }
.g2 .body { padding-left: 11px; grid-template-columns: 99px 1fr; }
.g3 .body { padding-left: 11px; grid-template-columns: 82px 141px 1fr; }
.g4 .body { padding-left: 10px; grid-template-columns: 68px 67px 79px 1fr; }
.g5 .body { padding-left: 10px; grid-template-columns: 40px 1fr; }
.g6 .body { padding-left: 10px; grid-template-columns: 80px 98px; column-gap: 6px; }
.g7 .body { padding-left: 7px; grid-template-columns: 91px 127px 1fr; }
.col { display: flex; flex-direction: column; }
.it { height: 28.500px; display: flex; align-items: center; white-space: nowrap; }
.ic { width: 19px; height: 19px; flex: none; margin-right: 4px; }
.it .car { margin-left: 5px; }
.it.dis { color: #bdbdbd; }
.it.dis .ic, .it.dis .car { opacity: .4; }
.bigsel { width: 50px; height: 84px; background: #e3edf8; border-radius: 3px; display: flex; flex-direction: column; align-items: center; }
.sel-ico { width: 28px; height: 40px; margin-top: 4px; flex: none; }
.bigsel span { margin-top: 3px; }
.bigit { display: flex; flex-direction: column; align-items: center; white-space: nowrap; }
.bigic { width: 40px; height: 40px; margin: 3px 0 6px; flex: none; }
.lab { height: 22px; display: flex; align-items: center; justify-content: center; }
.lab.up { padding-bottom: 4px; }
.lab .car { margin-left: 6px; }

.selbar { height: 32px; flex: none; background: #f0f0f0; display: flex; gap: 5px; padding: 2px 0 0 4px; }
.sel { width: 122px; height: 27px; background: #fff; border-radius: 3px; display: flex; align-items: center; justify-content: space-between; padding: 0 6px 0 4px; }
.sel .car { border-top-color: #555; }

/* main */
.main { flex: 1; min-height: 0; display: flex; background: #f0f0f0; }
.closebar { height: 15px; background: #e6e6e6; text-align: right; color: #aaa; font-size: 15px; line-height: 14px; padding-right: 4px; flex: none; }
.nav { width: 160px; flex: none; height: 783px; background: #fff; border-right: 1px solid #ddd; border-bottom: 1px solid #ddd; display: flex; flex-direction: column; }
.navhead { height: 28px; line-height: 27px; background: #f0f0f0; color: #888; padding-left: 11px; border-bottom: 1px solid #e2e2e2; flex: none; }
.navtools { height: 34px; display: flex; align-items: center; flex: none; padding-left: 10px; border-bottom: 1px solid #e8e8e8; }
.nt-spark { width: 18px; height: 18px; margin-right: 9px; }
.nt-btn { width: 30px; height: 28px; background: #c0dbf6; border-radius: 4px; display: flex; align-items: center; justify-content: center; margin-right: 6px; }
.nt-ic { width: 22px; height: 22px; }
.navbody { flex: 1; min-height: 0; display: flex; }
.navlist { width: 142px; flex: none; display: flex; flex-direction: column; padding-top: 4px; overflow: hidden; }
.ni { height: 35px; flex: none; display: flex; align-items: center; padding-left: 22px; white-space: nowrap; position: relative; }
.ni.on { background: #d6e8fc; }
.nic { width: 23px; height: 23px; flex: none; margin-right: 17px; }
.dot { position: absolute; left: 49.500px; top: -2px; width: 8px; height: 8px; border-radius: 50%; background: #f00; }
.nsec { height: 31px; flex: none; margin: 2px 0; background: #eee; line-height: 31px; padding-left: 5px; }
.navscroll { flex: none; width: 18px; padding: 152px 0 0 5px; }
.thumb { display: block; width: 9px; height: 219px; background: #c8c8c8; border-radius: 5px; }

.midcol { width: 358px; flex: none; margin-left: 7px; display: flex; flex-direction: column; gap: 5px; height: 783px; }
.panel { border: 1px solid #ddd; border-top: 0; background: #fff; display: flex; flex-direction: column; overflow: hidden; }
.comp { height: 459px; flex: none; }
.props { flex: 1; min-height: 0; }
.ptabs { height: 29px; background: #f0f0f0; display: flex; flex: none; border-bottom: 1px solid #e0e0e0; }
.ptab { width: 81px; text-align: center; line-height: 27px; background: #ddd; color: #888; margin-right: 1px; }
.ptab.on { background: #f2f2f2; color: #333; font-weight: 700; }
.ctools { height: 34px; display: flex; align-items: center; flex: none; border-bottom: 1px solid #eee; padding-left: 5px; }
.ct { display: flex; align-items: center; flex: none; }
.ct .ic { margin-right: 6px; }
.ct-new { width: 84px; }
.ct .car { margin-left: 8px; }
.ct-cp { width: 72px; }
.ct-del { width: 68px; }
.ct-fl { width: 113px; }
.ct-more { font-size: 10px; width: 12px; color: #555; letter-spacing: -2px; }
.csearch { height: 24px; display: flex; align-items: center; color: #aaa; padding-left: 3px; border-bottom: 1px solid #e2e2e2; flex: none; justify-content: space-between; padding-right: 10px; }
.csearch .sico { margin: 0; }
.tree { flex: 1; padding-top: 6px; }
.troot { height: 25px; margin-bottom: 5px; display: flex; align-items: center; padding-left: 17px; }
.troot .car { margin-right: 5px; }
.tn { margin-left: 51px; width: 239px; height: 26px; line-height: 26px; padding-left: 4px; margin-bottom: 4px; white-space: pre; border-radius: 3px; word-spacing: 3.500px; }
.tn.on { background: #c2d9f2; }

.pbody { flex: 1; min-height: 0; display: flex; overflow: hidden; }
table { border-collapse: collapse; table-layout: fixed; flex: none; }
.ptable { width: 336px; height: 262.500px; }
.c1 { width: 26.500px; } .c2 { width: 125.500px; } .c3 { width: 133.500px; } .c4 { width: 50.500px; }
th, td { height: 26.250px; padding: 0; border: 1px solid #e6e6e6; font-weight: 400; white-space: nowrap; overflow: hidden; line-height: 20px; }
th { text-align: center; }
th.hl { background: #7ab8f5; color: #fff; }
.ptable td { padding-left: 4px; }
.ptable td.n { background: #f0f0f0; text-align: center; padding: 0; }
.ptable td.ck { padding: 0; }
td.sel5 { background: #7ab8f5 !important; color: #fff; font-weight: 700; }
td.link { color: #3b6ff5; }
td.mut { color: #999; }
.rb { font-size: 12px; position: relative; top: -2px; }
td.focus { outline: 2px solid #777; outline-offset: -2px; }
.ck { text-align: center; line-height: 0; }
.cb { display: inline-block; width: 17px; height: 17px; border: 1.500px solid #aaa; border-radius: 3px; background: #fff; vertical-align: middle; position: relative; }
.cb.on { background: #2e7fe0; border-color: #2e7fe0; }
.cb.on::after { content: ""; display: block; width: 9px; height: 5px; border-left: 2px solid #fff; border-bottom: 2px solid #fff; transform: rotate(-45deg); margin: 3px 0 0 2.500px; }
.cb.tri { box-shadow: inset 0 0 0 1.500px #fff; background: #8fc0fa; }
.cb.off { background: #eee; }
.pscroll { flex: none; padding: 17px 0 0 6px; }
.pscroll .thumb { height: 165px; }

.gutter { width: 5px; flex: none; height: 785px; padding-top: 330px; background: #f0f0f0; }
.grip { display: block; width: 5px; height: 125px; background: #6a7078; }
.gut2 { padding-top: 330px; }
.canvas { width: 1094px; flex: none; height: 785px; background: #000; position: relative; overflow: hidden; }
.cad { display: block; }
.cad text { font-family: "Liberation Sans", sans-serif; }
.dk { stroke: #2020e0; stroke-width: 1.200; stroke-dasharray: 22 12; }
.pk { stroke: #ff33ff; stroke-width: 1.200; stroke-dasharray: 20 12; }
.cadw { fill: none; stroke: #dcdcdc; stroke-width: .8; letter-spacing: .3em; }
.cadg { fill: none; stroke: #2a9a10; stroke-width: 1; letter-spacing: .3em; }
.axy { fill: #20a020; font-size: 15px; }
.axx { fill: #f00000; font-size: 15px; }
.ftools { position: absolute; left: 1053px; top: 2px; width: 40px; height: 305px; background: #fff; border-radius: 0 0 3px 3px; display: flex; flex-direction: column; align-items: center; padding-top: 17px; }
.fi { width: 24px; height: 24px; flex: none; margin-bottom: 11px; overflow: visible; }
.fcar { margin: 0 0 9px; border-top-color: #666; border-left-width: 5px; border-right-width: 5px; }
.fdiv { width: 29px; height: 1px; background: #888; margin: 0 0 7px; flex: none; }
.tip-bar { position: absolute; left: 370.500px; top: 709px; width: 348px; height: 36px; background: #0a96fa; border-radius: 4px; color: #fff; display: flex; align-items: center; padding: 0 24px 0 9px; justify-content: space-between; }
.tip-bar::after { content: ""; position: absolute; left: 18px; bottom: -6px; border-top: 6px solid #0a96fa; border-left: 6px solid transparent; border-right: 6px solid transparent; }
.tip-off { color: #7fc4ff; }
.statusbar { position: absolute; left: 0; right: 0; bottom: 0; height: 34px; background: rgba(60,60,60,.72); color: #fff; display: flex; align-items: center; justify-content: center; }
.st-ic { width: 20px; height: 20px; margin-right: 4px; flex: none; }

.disp { flex: 1; min-width: 0; height: 783px; background: #fff; border-left: 1px solid #ddd; border-bottom: 1px solid #ddd; display: flex; flex-direction: column; overflow: hidden; }
.dtabs { height: 37px; flex: none; display: flex; align-items: flex-end; padding: 0 0 3px 2px; gap: 5px; }
.dtab { width: 75px; height: 28px; line-height: 27px; text-align: center; background: #e0e0e0; color: #777; border-radius: 4px 4px 0 0; }
.dtab.on { background: #fff; color: #3b95f5; border: 1px solid #ddd; border-bottom: 0; }
.dwrap { margin-left: 2px; border: 1px solid #e6e6e6; border-right: 0; width: 280px; flex: none; }
.dtable { width: 280px; }
.d1 { width: 126px; } .d2 { width: 79px; } .d3 { width: 75px; }
.dtable td.root { padding-left: 16px; background: linear-gradient(#e6e6e6,#e6e6e6) 12px 0/1px 100% no-repeat; }
.dtable td.leaf { padding-left: 50px; background:
  linear-gradient(#e6e6e6,#e6e6e6) 12px 0/1px 100% no-repeat,
  linear-gradient(#e6e6e6,#e6e6e6) 24px 0/1px 100% no-repeat,
  linear-gradient(#e6e6e6,#e6e6e6) 24px 50%/20px 1px no-repeat; }
.exp { display: inline-block; width: 15px; height: 14px; border: 1px solid #888; border-radius: 2px; line-height: 11px; text-align: center; font-size: 13px; margin-right: 9px; vertical-align: 1px; background: #fff; }
.hscroll { height: 25px; display: flex; align-items: center; padding-left: 8px; }
.harrow { width: 0; height: 0; border-right: 5px solid #666; border-top: 5px solid transparent; border-bottom: 5px solid transparent; margin-right: 5px; flex: none; }
.hthumb { width: 152px; height: 10px; border-radius: 5px; background: #c8c8c8; flex: none; }
.dfoot { flex: 1; min-height: 0; padding: 8px 0 0 167px; white-space: nowrap; }
.restore { display: inline-block; width: 120px; height: 31px; line-height: 29px; border: 1px solid #ddd; border-radius: 3px; padding-left: 10px; }
```
